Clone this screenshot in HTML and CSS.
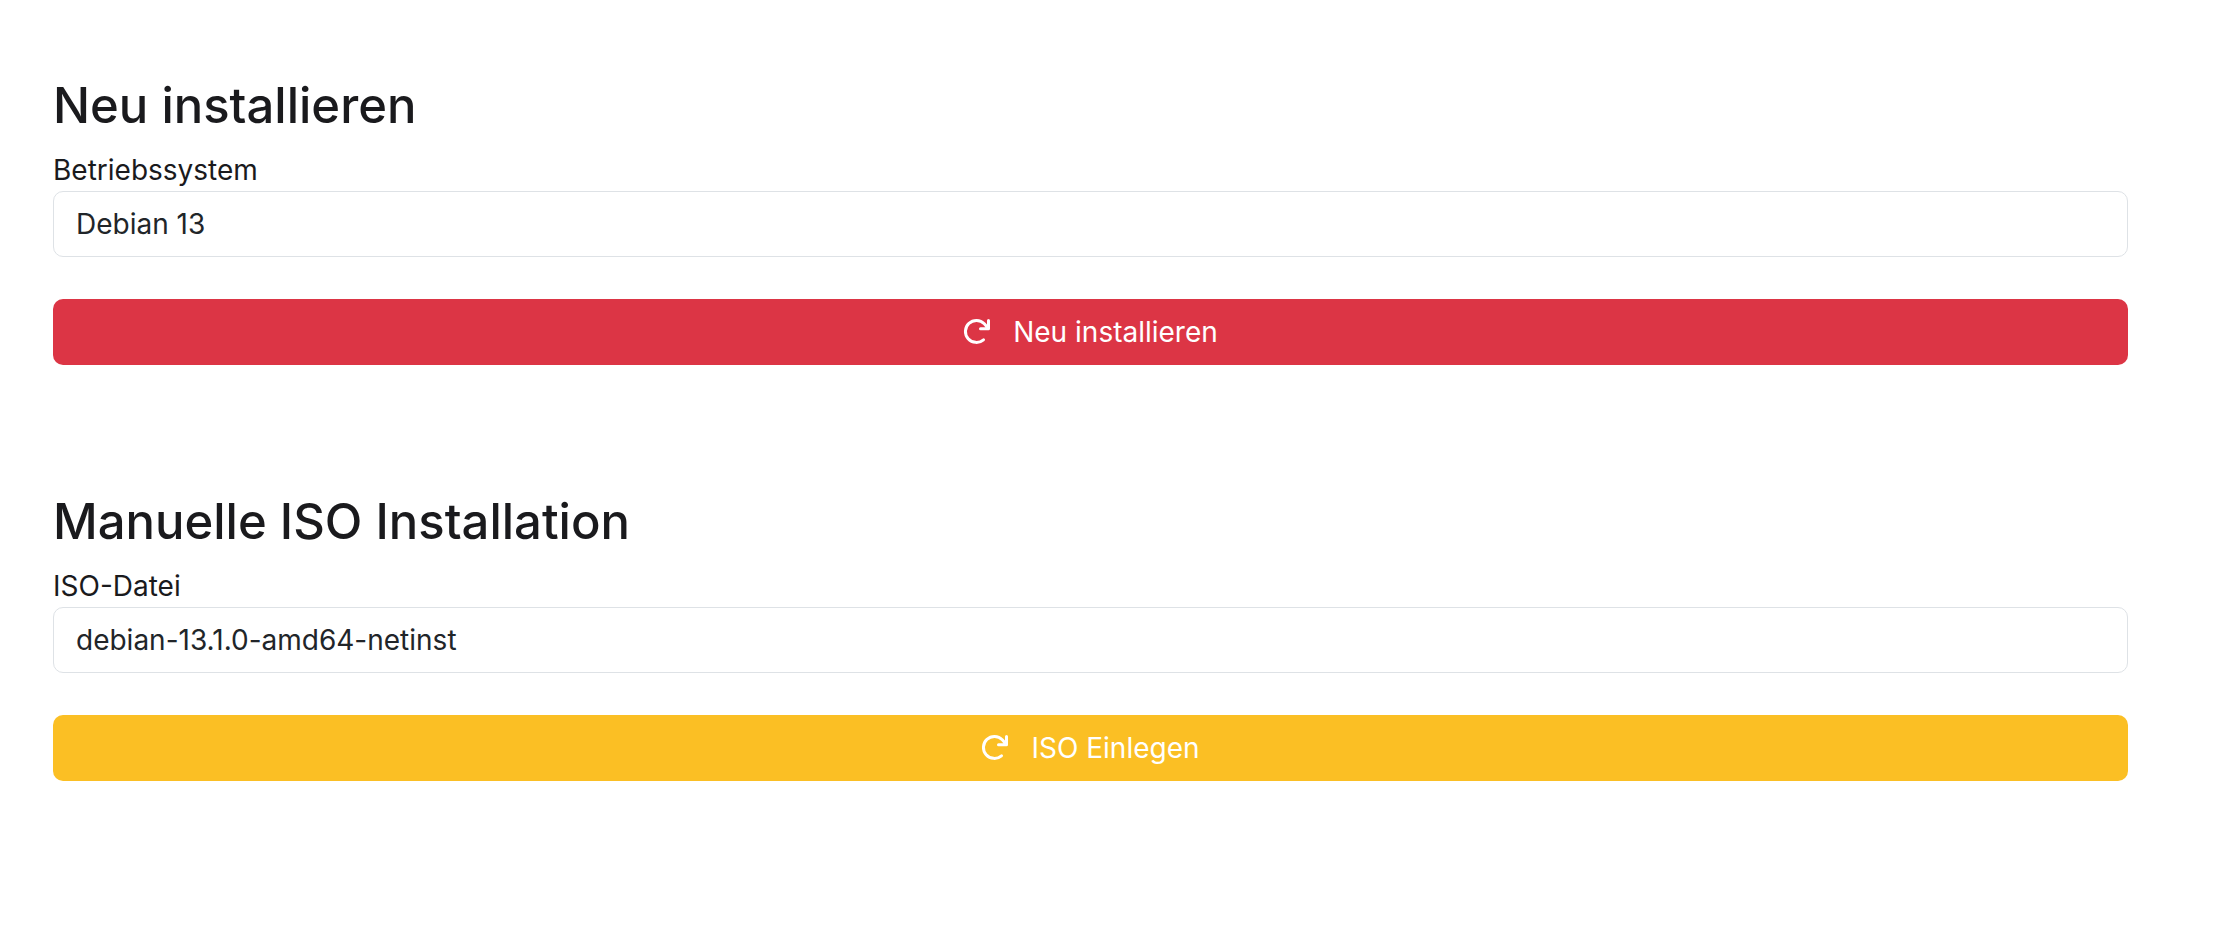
FILE: index.html
```
<!DOCTYPE html>
<html lang="de">
<head>
  <meta charset="UTF-8">
  <meta name="viewport" content="width=device-width, initial-scale=1.0">
  <title>Neu installieren</title>
  <link rel="stylesheet" href="styles.css">
</head>
<body>

<main class="page">
  <form class="install-section">
    <h2>Neu installieren</h2>
    <label for="os">Betriebssystem</label>
    <select id="os" name="os" class="form-select">
      <option selected>Debian 13</option>
    </select>
    <button type="button" class="btn btn-danger">
      <svg class="icon" viewBox="0 0 28 28" aria-hidden="true">
        <path d="M20.500 21.800A11 11 0 1 1 21.300 5.700L25.500 10.500M25.500 2.500V10.700H17.500"/>
      </svg>
      Neu installieren
    </button>
  </form>

  <form class="install-section">
    <h2>Manuelle ISO Installation</h2>
    <label for="iso">ISO-Datei</label>
    <select id="iso" name="iso" class="form-select">
      <option selected>debian-13.1.0-amd64-netinst</option>
    </select>
    <button type="button" class="btn btn-warning">
      <svg class="icon" viewBox="0 0 28 28" aria-hidden="true">
        <path d="M20.500 21.800A11 11 0 1 1 21.300 5.700L25.500 10.500M25.500 2.500V10.700H17.500"/>
      </svg>
      ISO Einlegen
    </button>
  </form>
</main>

</body>
</html>
```
FILE: styles.css
```
body {
  margin: 0;
  background-color: #fff;
  color: #1a1a1d;
  font-family: Inter, sans-serif;
  font-size: 28px;
  line-height: 42px;
}

.page {
  display: flex;
  flex-direction: column;
  gap: 127px;
  padding: 76px 96px 76px 53px;
}

.install-section {
  display: flex;
  flex-direction: column;
}

h2 {
  margin: 0 0 13px;
  font-size: 49px;
  font-weight: 500;
  line-height: 60px;
}

.form-select {
  appearance: none;
  height: 66px;
  margin: 0 0 42px;
  padding: 0 22px;
  border: 1px solid #dee2e6;
  border-radius: 10px;
  background-color: #fff;
  color: #212529;
  font: inherit;
}

.btn {
  display: flex;
  align-items: center;
  justify-content: center;
  gap: 22px;
  height: 66px;
  padding: 0 22px;
  border: none;
  border-radius: 10px;
  color: #fff;
  font: inherit;
  cursor: pointer;
}

.btn-danger {
  background-color: #dc3545;
}

.btn-warning {
  background-color: #fbbf24;
}

.icon {
  width: 28px;
  height: 28px;
  fill: none;
  stroke: currentColor;
  stroke-width: 3;
  stroke-linecap: round;
  stroke-linejoin: round;
}
```
